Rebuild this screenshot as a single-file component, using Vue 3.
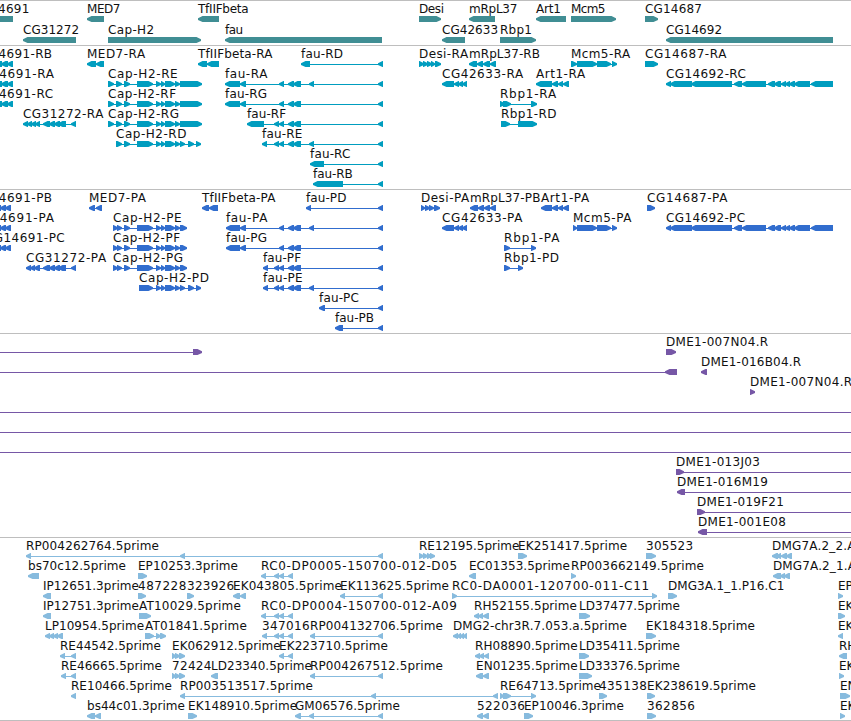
<template>
  <div class="browser">
    <section
      v-for="track in tracks"
      :key="track.name"
      class="track"
      :class="track.name"
    >
      <svg
        v-for="(row, i) in track.rows"
        :key="i"
        class="row"
        width="851"
        height="20"
      >
        <g v-for="(item, j) in row" :key="j">
          <rect
            class="intron"
            :x="item.from"
            y="18"
            :width="item.to - item.from"
            height="1"
          />
          <polygon
            v-for="(exon, k) in item.exons"
            :key="k"
            :points="arrow(exon, item.dir)"
          />
        </g>
        <text
          v-for="(item, j) in row.filter(r => r.label)"
          :key="'t' + j"
          class="label"
          :x="item.x"
          y="12"
          :textLength="item.right ? item.right - item.x + 0.4 : null"
        >{{ item.label }}</text>
      </svg>
    </section>
  </div>
</template>

<script setup>
// Block pointing left or right, with a short blunt head
const arrow = ([a, b], dir) => {
  const head = Math.min(4.5, b - a - 0.5)
  if (dir === 'L') {
    return `${a},17.2 ${a + head},15 ${b},15 ${b},21 ${a + head},21 ${a},19`
  }
  return `${a},15 ${b - head},15 ${b},17.2 ${b},19 ${b - head},21 ${a},21`
}

// label, label start, label end, strand, exons, optional full span
const f = (label, x, right, dir, exons, span) => ({
  label,
  x,
  right,
  dir,
  exons,
  from: span ? span[0] : exons[0][0],
  to: span ? span[1] : exons[exons.length - 1][1]
})

// Exon groups shared by several transcripts
const last = [378, 383]
const cg14691 = [[-6, 2], [1, 8], [7, 13]]
const cg14691P = [[-6, 1], [0, 6], [5, 11]]
const capMid = [[137, 153], [156, 161], [161, 165], [165, 175], [175, 180]]
const cap = [[108, 114], [116, 122], [124, 130], ...capMid, [180, 202]]
const capP = [[113, 118], [117, 122], [124, 130], ...capMid, [180, 187]]
const capTail = [...capMid, [180, 185], [188, 194], [196, 201]]
const fauMid = [[288, 294], [293, 301]]
const fauPair = [[274, 279], [279, 284]]
const fauG = [[240, 246], [279, 284], ...fauMid, last]
const fauA = [[240, 246], [279, 284], ...fauMid, [309, 314], last]
const cg42633 = [[442, 454], [454, 459], [458, 463], [462, 467]]
const cg31272 = [[43, 50], [49, 55], [54, 60], [58, 66], [71, 76]]
const cg14692 = [
  [666, 671], [670, 692], [691, 732], [734, 742], [742, 766], [768, 775],
  [774, 781], [781, 786], [785, 790], [789, 795], [794, 810], [811, 833]
]
const rc0 = [[261, 266], [274, 279], [279, 284], [288, 293]]
const ek06 = [[172, 176], [175, 180], [179, 185]]

const genes = [
  [
    f('CG14691', -28, 29, 'L', [[-40, 13]]),
    f('MED7', 87, 120, 'L', [[87, 104]]),
    f('TfIIFbeta', 198, 248.3, 'L', [[198, 219]]),
    f('Desi', 419, 443.6, 'R', [[419, 441]]),
    f('mRpL37', 469, 517, 'L', [[469, 495]]),
    f('Art1', 536, 560.5, 'L', [[536, 566]]),
    f('Mcm5', 571, 605, 'R', [[571, 616]]),
    f('CG14687', 645, 701.5, 'R', [[645, 658]])
  ],
  [
    f('CG31272', 23, 78.7, 'L', [[23, 76]]),
    f('Cap-H2', 108, 153.7, 'R', [[108, 201]]),
    f('fau', 225, 242.7, 'L', [[225, 382]]),
    f('CG42633', 442, 497.7, 'L', [[442, 465]]),
    f('Rbp1', 500, 531.5, 'R', [[500, 536]]),
    f('CG14692', 666, 721.7, 'L', [[666, 833]])
  ]
]

const transcripts = [
  [
    f('CG14691-RB', -28, 51.7, 'L', cg14691),
    f('MED7-RA', 87, 144.7, 'L', [[87, 96], [96, 104]]),
    f('TfIIFbeta-RA', 198, 272, 'L', [[198, 207], [207, 219]]),
    f('fau-RD', 301, 342.5, 'L', [[301, 310], last]),
    f('Desi-RA', 419, 467.7, 'R', [[419, 424], [423, 428], [427, 432], [431, 435], [435, 441]]),
    f('mRpL37-RB', 469, 539.5, 'L', [[469, 477], [477, 483], [483, 490], [490, 496]]),
    f('Mcm5-RA', 571, 629.7, 'R', [[571, 577], [577, 597], [597, 611], [612, 617]]),
    f('CG14687-RA', 645, 726, 'R', [[645, 658]])
  ],
  [
    f('CG14691-RA', -28, 53.5, 'L', cg14691),
    f('Cap-H2-RE', 108, 177.3, 'R', cap),
    f('fau-RA', 225, 267, 'L', [[225, 240], ...fauA]),
    f('CG42633-RA', 442, 522.7, 'L', cg42633),
    f('Art1-RA', 536, 584.7, 'L', [[536, 552], [552, 558], [558, 563], [563, 569]]),
    f('CG14692-RC', 666, 745.5, 'L', cg14692)
  ],
  [
    f('CG14691-RC', -28, 52.7, 'L', cg14691),
    f('Cap-H2-RF', 108, 175.7, 'R', cap),
    f('fau-RG', 225, 266.7, 'L', [[225, 240], ...fauG]),
    f('Rbp1-RA', 500, 555.7, 'R', [[500, 505], [503, 511], [531, 537]])
  ],
  [
    f('CG31272-RA', 23, 103, 'L', [[23, 28], [27, 32], [31, 36], [35, 40], ...cg31272]),
    f('Cap-H2-RG', 108, 178.7, 'R', cap),
    f('fau-RF', 247, 285.7, 'L', [[247, 264], ...fauPair, ...fauMid, last]),
    f('Rbp1-RD', 501, 556, 'R', [[501, 510], [518, 537]])
  ],
  [
    f('Cap-H2-RD', 116, 186, 'R', [[116, 122], [124, 130], ...capTail]),
    f('fau-RE', 262, 302, 'L', [[262, 267], ...fauPair, ...fauMid, [309, 314], last])
  ],
  [f('fau-RC', 310, 350, 'L', [[310, 324], last])],
  [f('fau-RB', 313, 352.3, 'L', [[313, 343], last])]
]

const proteins = [
  [
    f('CG14691-PB', -28, 51.7, 'L', cg14691P),
    f('MED7-PA', 89, 145.5, 'L', [[89, 95], [96, 102]]),
    f('TfIIFbeta-PA', 202, 275, 'L', [[202, 209], [209, 218]]),
    f('fau-PD', 306, 346, 'L', [[306, 311], last]),
    f('Desi-PA', 421, 468.7, 'R', [[421, 425], [425, 430], [429, 434], [434, 440]]),
    f('mRpL37-PB', 470, 540, 'L', [[470, 478], [478, 484], [484, 490], [490, 496]]),
    f('Art1-PA', 541, 588.7, 'L', [[541, 552], [552, 558], [558, 563], [563, 569]]),
    f('CG14687-PA', 647, 727, 'R', [[647, 655]])
  ],
  [
    f('CG14691-PA', -28, 53.5, 'L', cg14691P),
    f('Cap-H2-PE', 113, 181.3, 'R', capP),
    f('fau-PA', 226, 267, 'L', [[226, 240], ...fauA]),
    f('CG42633-PA', 442, 522, 'L', cg42633),
    f('Mcm5-PA', 573, 631, 'R', [[573, 577], [577, 597], [597, 611], [612, 617]]),
    f('CG14692-PC', 666, 744.7, 'L', cg14692)
  ],
  [
    f('CG14691-PC', -15, 64.3, 'L', cg14691P),
    f('Cap-H2-PF', 113, 179.7, 'R', capP),
    f('fau-PG', 226, 266.7, 'L', [[226, 240], ...fauG]),
    f('Rbp1-PA', 504, 559, 'R', [[504, 510], [531, 536]])
  ],
  [
    f('CG31272-PA', 26, 105.7, 'L', [[26, 31], [30, 35], [34, 40], ...cg31272]),
    f('Cap-H2-PG', 113, 182.7, 'R', capP),
    f('fau-PF', 263, 300.7, 'L', [[263, 268], ...fauPair, ...fauMid, last]),
    f('Rbp1-PD', 504, 558.5, 'R', [[504, 510], [518, 523]])
  ],
  [
    f('Cap-H2-PD', 139, 208.5, 'R', [[139, 153], ...capTail.slice(1)]),
    f('fau-PE', 263, 302.3, 'L', [[263, 268], ...fauPair, ...fauMid, [309, 314], last])
  ],
  [f('fau-PC', 319, 358.5, 'L', [[319, 325], last])],
  [f('fau-PB', 335, 373.7, 'L', [[335, 343], last])]
]

const full = [-10, 861]
const bacs = [
  [
    f('', 0, 0, 'R', [[193, 202]], [-10, 202]),
    f('DME1-007N04.R', 666, 767.7, 'R', [[666, 676]])
  ],
  [
    f('', 0, 0, 'L', [[665, 677]], [-10, 677]),
    f('DME1-016B04.R', 701, 800.7, 'L', [[701, 707]])
  ],
  [f('DME1-007N04.R', 750, 851.7, 'R', [[750, 755]])],
  [f('', 0, 0, 'R', [], full)],
  [f('', 0, 0, 'R', [], full)],
  [f('', 0, 0, 'R', [], full)],
  [f('DME1-013J03', 676, 759.5, 'R', [[676, 684]], [676, 861])],
  [f('DME1-016M19', 677, 767.5, 'L', [[677, 685]], [677, 861])],
  [f('DME1-019F21', 697, 783.5, 'R', [[697, 705]], [697, 861])],
  [f('DME1-001E08', 698, 785.5, 'L', [[698, 707]], [698, 861])]
]

const ests = [
  [
    f('RP004262764.5prime', 26, 158.5, 'L', [[26, 31], [180, 185], last]),
    f('RE12195.5prime', 419, 519, 'R', [[419, 424], [423, 428], [427, 432], [430, 435]]),
    f('EK251417.5prime', 518, 626.7, 'R', [[518, 527]]),
    f('305523', 646, 692.7, 'R', [[646, 656]]),
    f('DMG7A.2_2.A', 772, 855, 'L', [[772, 778], [776, 781], [781, 787], [786, 792]])
  ],
  [
    f('bs70c12.5prime', 28, 125.5, 'L', [[28, 39]]),
    f('EP10253.3prime', 138, 237.5, 'R', [[138, 147]]),
    f('RC0-DP0005-150700-012-D05', 261, 456.7, 'L', rc0),
    f('EC01353.5prime', 469, 569.5, 'L', [[469, 476]]),
    f('RP003662149.5prime', 571, 703.5, 'R', [[571, 576]]),
    f('DMG7A.2_1.A', 773, 855.5, 'L', [[773, 781], [780, 785], [784, 790]])
  ],
  [
    f('IP12651.3prime', 43, 138.5, 'L', [[43, 51]]),
    f('487228', 138, 186, 'R', [[138, 146]]),
    f('323926', 187, 233.7, 'R', [[187, 194]]),
    f('EK043805.5prime', 233, 341.5, 'L', [[233, 240], [240, 246]]),
    f('EK113625.5prime', 340, 448.5, 'L', [[340, 345], last]),
    f('RC0-DA0001-120700-011-C11', 452, 648.7, 'R', [[452, 457], [652, 657]]),
    f('DMG3A.1_1.P16.C1', 668, 784, 'R', [[668, 677]]),
    f('EP', 838, 0, 'R', [[838, 843]])
  ],
  [
    f('IP12751.3prime', 43, 138.5, 'L', [[43, 51]]),
    f('AT10029.5prime', 139, 240.5, 'R', [[139, 151]]),
    f('RC0-DP0004-150700-012-A09', 261, 456.5, 'L', rc0),
    f('RH52155.5prime', 474, 576.5, 'L', [[474, 479], [478, 483], [483, 489]]),
    f('LD37477.5prime', 579, 679.5, 'R', [[579, 590]]),
    f('EK', 838, 0, 'R', [[838, 845]])
  ],
  [
    f('LP10954.5prime', 45, 143.7, 'L', [[45, 50], [49, 54], [53, 58], [57, 63]]),
    f('AT01841.5prime', 145, 246.5, 'R', [[145, 154], [156, 161], [160, 166]]),
    f('347016', 262, 309.3, 'L', [[262, 267], ...rc0.slice(1)]),
    f('RP004132706.5prime', 310, 442.5, 'L', [[310, 315], last]),
    f('DMG2-chr3R.7.053.a.5prime', 453, 626.5, 'L', [[453, 458], [457, 461], [460, 464], [463, 467]]),
    f('EK184318.5prime', 646, 754.5, 'R', [[646, 656]]),
    f('EK', 838, 0, 'L', [[838, 843]])
  ],
  [
    f('RE44542.5prime', 60, 160.5, 'L', [[60, 65], [71, 76]]),
    f('EK062912.5prime', 172, 280.3, 'R', ek06),
    f('EK223710.5prime', 279, 387.5, 'L', [[279, 284], [288, 293]]),
    f('RH08890.5prime', 475, 577.3, 'L', [[475, 480], [479, 484], [484, 489]]),
    f('LD35411.5prime', 579, 679.5, 'R', [[579, 589]]),
    f('RH', 839, 0, 'L', [[839, 847]])
  ],
  [
    f('RE46665.5prime', 61, 161.5, 'L', [[61, 66], [71, 76]]),
    f('72424', 172, 211, 'R', ek06),
    f('LD23340.5prime', 211, 311.5, 'L', [[211, 218]]),
    f('RP004267512.5prime', 310, 442.5, 'L', [[310, 315], last]),
    f('EN01235.5prime', 476, 577.3, 'L', [[476, 483], [483, 489]]),
    f('LD33376.5prime', 579, 679.5, 'R', [[579, 592]]),
    f('EK', 839, 0, 'R', [[839, 844]])
  ],
  [
    f('RE10466.5prime', 71, 171.5, 'L', [[71, 76]]),
    f('RP003513517.5prime', 180, 312.5, 'L', [[180, 185], [371, 376], [493, 498]]),
    f('RE64713.5prime', 500, 600.5, 'R', [[500, 504], [503, 511], [531, 536]]),
    f('435138', 599, 646.5, 'R', [[599, 607]]),
    f('EK238619.5prime', 647, 755.5, 'R', [[647, 655]]),
    f('EN', 840, 0, 'R', [[840, 850]])
  ],
  [
    f('bs44c01.3prime', 87, 184.5, 'L', [[87, 95], [95, 101]]),
    f('EK148910.5prime', 188, 296.7, 'R', [[188, 197]]),
    f('GM06576.5prime', 295, 399.5, 'L', [[295, 301], [309, 314], last]),
    f('522036', 477, 524.5, 'L', [[477, 483], [483, 489]]),
    f('EP10046.3prime', 524, 623.5, 'R', [[524, 533]]),
    f('362856', 647, 694.5, 'R', [[647, 656]]),
    f('EK', 840, 0, 'R', [[840, 845]])
  ]
]

const tracks = [
  { name: 'genes', rows: genes },
  { name: 'transcripts', rows: transcripts },
  { name: 'proteins', rows: proteins },
  { name: 'bacs', rows: bacs },
  { name: 'ests', rows: ests }
]
</script>

<style>
body {
  margin: 0;
  background: #fff;
}
</style>

<style scoped>
.browser {
  width: 851px;
  height: 721px;
  overflow: hidden;
  background: #fff;
}

.track {
  display: flex;
  flex-direction: column;
  border-top: 1px solid #bebebe;
  padding-bottom: 3px;
}

.row {
  display: block;
  flex: none;
  overflow: visible;
}

.label {
  font-family: "DejaVu Sans", sans-serif;
  font-size: 12px;
  fill: #111;
}

.genes {
  fill: #408e94;
  gap: 1px;
}

.transcripts {
  fill: #009dbf;
}

.proteins {
  fill: #316dce;
}

.bacs {
  fill: #7657a6;
}

.ests {
  fill: #87bbde;
  padding-bottom: 2px;
  border-bottom: 1px solid #bebebe;
}
</style>
